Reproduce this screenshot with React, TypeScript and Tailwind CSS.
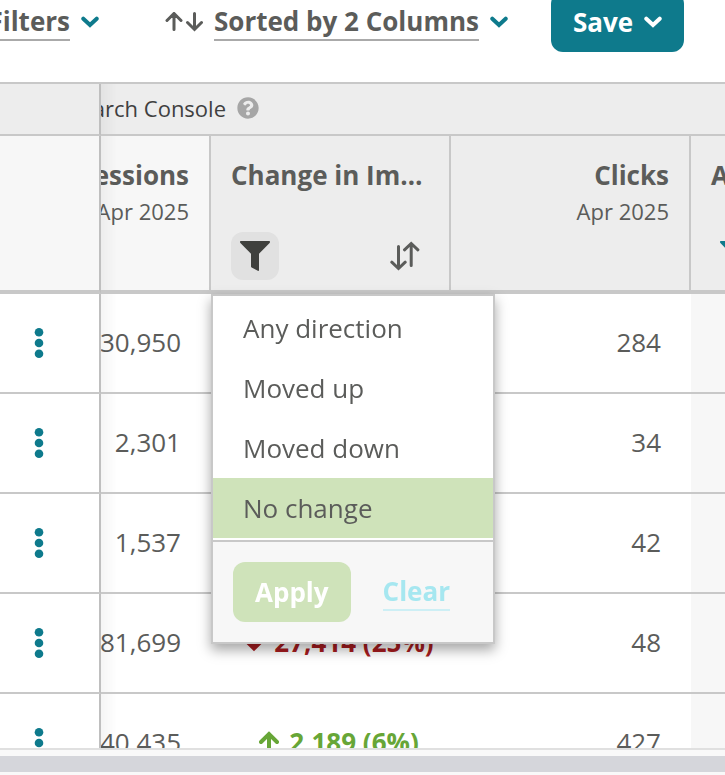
import React from 'react';
import { FaQuestionCircle } from 'react-icons/fa';

interface Change {
  direction: 'up' | 'down';
  label: string;
}

interface KeywordRow {
  id: number;
  impressions: string;
  clicks: string;
  change?: Change;
}

const rows: KeywordRow[] = [
  { id: 1, impressions: '30,950', clicks: '284' },
  { id: 2, impressions: '2,301', clicks: '34' },
  { id: 3, impressions: '1,537', clicks: '42' },
  { id: 4, impressions: '81,699', clicks: '48', change: { direction: 'down', label: '27,414 (25%)' } },
  { id: 5, impressions: '40,435', clicks: '427', change: { direction: 'up', label: '2,189 (6%)' } },
];

const directions = ['Any direction', 'Moved up', 'Moved down', 'No change'];

// Sticky first column, with a soft shade falling on the column beside it
const pinned =
  'sticky left-0 z-10 border-r-2 border-r-[#bfbfbf] after:absolute after:inset-y-0 after:left-full after:ml-[2px] after:w-4 after:bg-gradient-to-r after:from-black/4 after:to-transparent';

const Chevron = () => (
  <svg className="h-3 w-[18px] shrink-0" viewBox="0 0 18 12" fill="none" stroke="currentColor" strokeWidth="4" strokeLinecap="round" strokeLinejoin="miter">
    <path d="M2.3 2.7 9 9l6.700-6.300" />
  </svg>
);

const UpDownIcon = () => (
  <svg className="h-5 w-[38px] shrink-0" viewBox="0 0 38 20" fill="none" stroke="currentColor" strokeWidth="3" strokeLinecap="round">
    <path d="M9 17.500V2M2 8.500 9 1.500l7 7M29.500 1.500V17M22.500 10.500l7 7 7-7" />
  </svg>
);

const FunnelIcon = () => (
  <svg className="h-[30px] w-[30px] shrink-0" viewBox="0 0 30 30" fill="currentColor">
    <path d="M1 0h28c1 0 1.300 1.200.6 1.900L19 12.800V29c0 .8-.6 1.100-1.200.7L11.600 26.500c-.4-.3-.6-.6-.6-1V12.800L.4 1.900C-.3 1.200 0 0 1 0Z" />
  </svg>
);

const SortIcon = () => (
  <svg className="h-[30px] w-[30px] shrink-0" viewBox="0 0 30 30" fill="none" stroke="currentColor" strokeWidth="3" strokeLinecap="round">
    <path d="M8.500 5.500V27M1.800 21.200l6.700 6.300 6.700-6.300M21.200 24.500V3M14.500 8.800l6.700-6.300 6.700 6.300" />
  </svg>
);

const ChangeArrow: React.FC<{ direction: Change['direction'] }> = ({ direction }) => (
  <svg className="h-6 w-5 shrink-0" viewBox="0 0 20 24" fill="none" stroke="currentColor" strokeWidth="4" strokeLinecap="round">
    {direction === 'up' ? (
      <path d="M10 22V4M2 12l8-8 8 8" />
    ) : (
      <path d="M10 2v16M2 10.500l8 8 8-8" />
    )}
  </svg>
);

const DotsIcon = () => (
  <svg className="h-8 w-3" viewBox="0 0 12 32" fill="currentColor">
    <circle cx="6" cy="5.300" r="4.300" />
    <circle cx="6" cy="16" r="4.300" />
    <circle cx="6" cy="26.700" r="4.300" />
  </svg>
);

const Toolbar = () => (
  <div className="-mt-2 flex shrink-0 items-center pb-[30px] font-bold">
    <button className="flex w-[99px] shrink-0 items-center justify-end gap-[11px] overflow-hidden">
      <span className="border-b-2 border-[#aaaaaa] leading-[36px]">Filters</span>
      <span className="text-[#0e7a8c]"><Chevron /></span>
    </button>
    <button className="ml-[66px] flex shrink-0 items-center gap-[11px] whitespace-nowrap">
      <UpDownIcon />
      <span className="border-b-2 border-[#aaaaaa] leading-[36px]">Sorted by 2 Columns</span>
      <span className="text-[#0e7a8c]"><Chevron /></span>
    </button>
    <button className="ml-[43px] flex h-[60px] shrink-0 items-center gap-[11px] rounded-xl bg-[#0e7a8c] px-[22px] text-white">
      Save
      <Chevron />
    </button>
  </div>
);

const DirectionFilter = () => (
  <div className="absolute top-full left-0 z-20 mt-1 w-[284px] border-2 border-[#c8c8c8] bg-white text-left font-normal shadow-[0_6px_12px_rgba(0,0,0,0.35)]">
    <ul className="py-[2px]">
      {directions.map((direction) => (
        <li key={direction}>
          <button
            className={`h-[60px] w-full px-[30px] text-left ${direction === 'No change' ? 'bg-[#cfe3ba]' : 'bg-white'}`}
          >
            {direction}
          </button>
        </li>
      ))}
    </ul>
    <div className="flex items-center gap-8 border-t-2 border-[#c8c8c8] bg-[#f7f7f7] p-5 font-bold">
      <button className="h-[60px] rounded-xl bg-[#cfe3ba] px-[22px] text-white">Apply</button>
      <button className="border-b-2 border-[#cdeff5] leading-[36px] text-[#a6e7f0]">Clear</button>
    </div>
  </div>
);

const App: React.FC = () => {
  return (
    <div className="flex h-screen flex-col overflow-hidden bg-white font-['Open_Sans',sans-serif] text-[26px] text-[#5b5c5a]">
      <Toolbar />

      <div className="min-h-0 flex-1 overflow-hidden border-t-2 border-[#c8c8c8]">
        <table className="w-full table-fixed border-separate border-spacing-0">
          <colgroup>
            <col className="w-[101px]" />
            <col className="w-[110px]" />
            <col className="w-[240px]" />
            <col className="w-[240px]" />
            <col />
          </colgroup>
          <thead>
            <tr className="bg-[#ededed]">
              <th className={`${pinned} border-b-2 border-b-[#c8c8c8] bg-[#ededed] p-0`} />
              <th colSpan={4} className="h-[52px] border-b-2 border-[#c8c8c8] p-0 pb-[2px] text-[22px] font-normal text-[#3f403f]">
                <div className="flex w-[158px] items-center justify-end gap-[11px] overflow-hidden whitespace-nowrap">
                  Search Console
                  <FaQuestionCircle className="h-[22px] w-[22px] shrink-0 text-[#a6a6a6]" />
                </div>
              </th>
            </tr>
            <tr className="leading-[36px]">
              <th className={`${pinned} border-b-4 border-b-[#c8c8c8] bg-[#f7f7f7] p-0`} />
              <th className="border-r-2 border-b-4 border-[#c8c8c8] bg-[#f7f7f7] p-0">
                <div className="flex h-[154px] flex-col items-end overflow-hidden px-5 pt-[21px]">
                  <span>Impressions</span>
                  <span className="text-[22px] font-normal whitespace-nowrap">Apr 2025</span>
                </div>
              </th>
              <th className="relative border-r-2 border-b-4 border-[#c8c8c8] bg-[#ededed] p-0 text-left">
                <div className="flex h-[154px] flex-col justify-between px-5 pt-[21px] pb-[10px]">
                  <span className="truncate">Change in Impressions</span>
                  <div className="flex justify-between">
                    <button aria-label="Filter" className="flex h-12 w-12 items-center justify-center rounded-xl bg-[#e1e1e1] text-[#3f403d]">
                      <FunnelIcon />
                    </button>
                    <button aria-label="Sort" className="flex h-12 w-12 items-center justify-center">
                      <SortIcon />
                    </button>
                  </div>
                </div>
                <DirectionFilter />
              </th>
              <th className="border-r-2 border-b-4 border-[#c8c8c8] bg-[#ededed] p-0">
                <div className="flex h-[154px] flex-col items-end px-5 pt-[21px]">
                  <span>Clicks</span>
                  <span className="text-[22px] font-normal">Apr 2025</span>
                </div>
              </th>
              <th className="border-b-4 border-[#c8c8c8] bg-[#ededed] p-0 text-left">
                <div className="flex h-[154px] flex-col justify-between overflow-hidden pt-[21px] pb-[10px] pl-5 whitespace-nowrap">
                  <span>Average</span>
                  <button aria-label="Filter" className="flex h-12 w-12 items-center justify-center text-[#0e7a8c]">
                    <FunnelIcon />
                  </button>
                </div>
              </th>
            </tr>
          </thead>
          <tbody>
            {rows.map((row) => (
              <tr key={row.id} className="h-[100px]">
                <td className={`${pinned} border-b-2 border-b-[#c8c8c8] bg-white p-0`}>
                  <button aria-label="Row actions" className="ml-[15px] flex h-12 w-12 items-center justify-center text-[#0e7a8c]">
                    <DotsIcon />
                  </button>
                </td>
                <td className="border-b-2 border-[#c8c8c8] p-0 pb-[2px]">
                  <div className="flex justify-end pr-[30px]">{row.impressions}</div>
                </td>
                <td className="border-b-2 border-[#c8c8c8] p-0 pb-[2px]">
                  {row.change && (
                    <div
                      className={`flex items-center justify-center gap-[10px] pl-4 font-bold whitespace-nowrap ${
                        row.change.direction === 'up' ? 'text-[#67a637]' : 'text-[#a81c20]'
                      }`}
                    >
                      <ChangeArrow direction={row.change.direction} />
                      {row.change.label}
                    </div>
                  )}
                </td>
                <td className="border-b-2 border-[#c8c8c8] p-0 pr-[30px] pb-[2px] text-right">{row.clicks}</td>
                <td className="border-b-2 border-[#c8c8c8] bg-[#f7f7f7] p-0" />
              </tr>
            ))}
          </tbody>
        </table>
      </div>

      {/* Horizontal scroll track */}
      <div className="shrink-0 border-t-2 border-[#e0e0e0] bg-[#f9f9f9] pt-[6px] pb-[3px]">
        <div className="h-4 bg-[#d5d6db]" />
      </div>
    </div>
  );
};

export default App;
